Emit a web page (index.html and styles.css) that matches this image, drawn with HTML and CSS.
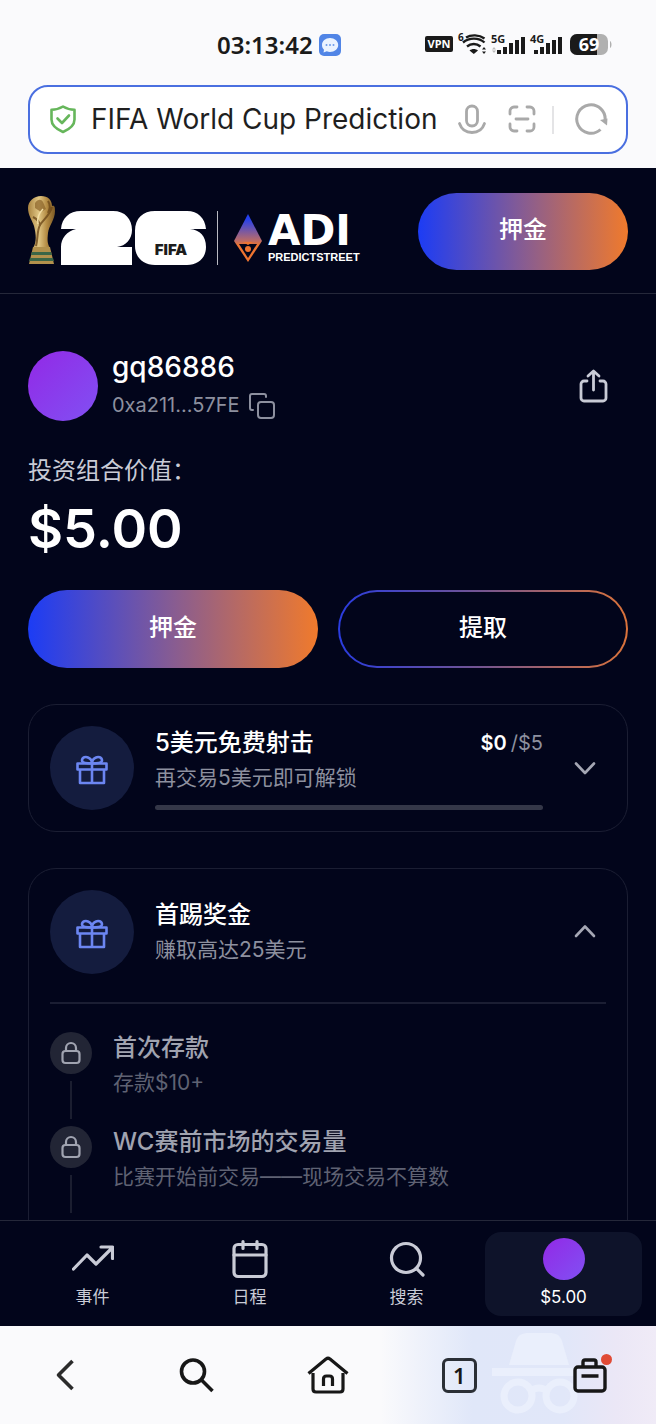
FILE: index.html
```html
<!DOCTYPE html>
<html lang="zh-CN">
<head>
<meta charset="UTF-8" />
<meta name="viewport" content="width=device-width, initial-scale=1" />
<title>FIFA World Cup Prediction</title>
<link rel="stylesheet" href="styles.css">
</head>
<body>
  <!-- Phone status + address bar -->
  <div class="chrome">
    <div class="status">
      <span class="time">03:13:42</span>
      <svg class="msg" viewBox="0 0 22 22" aria-hidden="true">
        <rect width="22" height="22" rx="5" fill="#5185e6"/>
        <path d="M11 4C6.500 4 3 7 3 11c0 2 .8 3.500 2 4.800L4.500 18.500l3.300-1.200c1 .4 2 .6 3.200.6 4.500 0 8.200-3 8.200-7S15.500 4 11 4z" fill="#eaf3ff"/>
        <circle cx="7.500" cy="11" r="1" fill="#6b9bea"/><circle cx="11" cy="11" r="1" fill="#6b9bea"/><circle cx="14.500" cy="11" r="1" fill="#6b9bea"/>
      </svg>
      <svg class="signals" viewBox="0 0 188 26" aria-hidden="true">
        <rect x="0" y="4" width="28" height="16" rx="2" fill="#1a1a1a"/>
        <text x="14" y="16" text-anchor="middle" font-size="11" font-weight="700" fill="#fff">VPN</text>
        <text x="33" y="9" font-size="10" font-weight="700" fill="#1a1a1a">6</text>
        <g fill="none" stroke="#1a1a1a" stroke-width="2.400">
          <path d="M41 5.500c5-3 13-3 18.500 1"/>
          <path d="M38 10.500c6-5.200 16-5.200 21.500 0"/>
          <path d="M42 14.500c4-3.400 9.500-3.400 13.500 0"/>
        </g>
        <path d="M44.500 18.500c2.500-2 6-2 8.500 0L48.800 22z" fill="#1a1a1a"/>
        <path d="M59 15l2 2.500h-4zM59 22l2-2.500h-4z" fill="#1a1a1a"/>
        <text x="66" y="11" font-size="11" font-weight="700" fill="#1a1a1a">5G</text>
        <path d="M69 15l2 2.500h-4zM69 21l2-2.500h-4z" fill="#bbb"/>
        <g fill="#1a1a1a">
          <rect x="72" y="18" width="4" height="4"/><rect x="78" y="15" width="4" height="7"/><rect x="84" y="11" width="4" height="11"/><rect x="90" y="8" width="4" height="14"/><rect x="96" y="5" width="4" height="17"/>
          <rect x="109" y="18" width="4" height="4"/><rect x="115" y="15" width="4" height="7"/><rect x="121" y="11" width="4" height="11"/><rect x="127" y="8" width="4" height="14"/><rect x="133" y="5" width="4" height="17"/>
        </g>
        <text x="105" y="11" font-size="11" font-weight="700" fill="#1a1a1a">4G</text>
        <rect x="145" y="2" width="38" height="21" rx="7" fill="#b0b0b0"/>
        <path d="M152 2h20v21h-20a7 7 0 0 1-7-7V9a7 7 0 0 1 7-7z" fill="#1a1a1a"/>
        <path d="M185 9c2 1 2 6 0 7z" fill="#b0b0b0"/>
        <text x="164" y="19" text-anchor="middle" font-size="18" font-weight="700" fill="#fff">69</text>
      </svg>
    </div>
    <div class="address">
      <svg class="shield" viewBox="0 0 30 30" fill="none" stroke="#66b65b" stroke-width="2.600" stroke-linejoin="round" stroke-linecap="round" aria-hidden="true">
        <path d="M15 1.500c3.500 2.200 7.500 3.200 11.500 3.200v9.800c0 5.500-4.500 9.500-11.500 12.500C8 24 3.500 20 3.500 14.500V4.700c4 0 8-1 11.500-3.200z"/>
        <path d="M9.500 13.500l4.500 4.500 7-7.500"/>
      </svg>
      <input class="address-input" type="text" value="FIFA World Cup Prediction" aria-label="地址栏">
      <button class="icon-btn" aria-label="语音">
        <svg viewBox="0 0 30 34" width="30" height="34" fill="none" stroke="#a9a9a9" stroke-width="2.800" stroke-linecap="round">
          <rect x="9.500" y="3" width="11" height="20" rx="5.500"/>
          <path d="M2.500 20.500c2 6 7 9 12.500 9s10.500-3 12.500-9"/>
        </svg>
      </button>
      <button class="icon-btn scan" aria-label="扫描">
        <svg viewBox="0 0 30 34" width="30" height="34" fill="none" stroke="#a9a9a9" stroke-width="2.800" stroke-linecap="round">
          <path d="M3 11V8a4 4 0 0 1 4-4h3M20 4h3a4 4 0 0 1 4 4v3M27 21v3a4 4 0 0 1-4 4h-3M10 28H7a4 4 0 0 1-4-4v-3M9 16h12"/>
        </svg>
      </button>
      <span class="sep"></span>
      <button class="icon-btn" aria-label="刷新">
        <svg viewBox="0 0 34 34" width="34" height="34" fill="none" stroke="#a9a9a9" stroke-width="3">
          <path d="M26.500 26.500A14.200 14.200 0 1 1 31 18"/>
          <path d="M26 17l7.500-1.500-.5 7z" fill="#a9a9a9" stroke="none"/>
        </svg>
      </button>
    </div>
  </div>

  <header class="header">
    <a class="brand" href="#" aria-label="ADI Predictstreet">
      <svg class="trophy" viewBox="0 0 28 70" aria-hidden="true">
        <defs>
          <linearGradient id="gold" x1="0" x2="1" y1="0" y2="0">
            <stop offset="0" stop-color="#a98340"/><stop offset=".4" stop-color="#e0c684"/><stop offset=".7" stop-color="#b38a42"/><stop offset="1" stop-color="#7c5a25"/>
          </linearGradient>
        </defs>
        <path d="M13 1c7 0 11 4 11 10 3-1 3 2 3 5 0 9-6 14-7 22-.6 6-1 10 2 15H5c4-6 3-14 1-22C4 25 0 20 0 13 0 6 6 1 13 1z" fill="url(#gold)"/>
        <path d="M7 8c3-4 6-4 8-1l3 7-5 3-6-4z" fill="#8a6228" opacity=".7"/>
        <path d="M24 12c-2 8-8 12-12 18-3 5-2 14-4 21M5 22c4 2 7 5 7 9M20 6c2 3 2 8 0 12" fill="none" stroke="#6d4819" stroke-width="2" opacity=".8"/>
        <path d="M15 14c-4 4-6 9-5 15" fill="none" stroke="#f3dfa5" stroke-width="1.500"/>
        <path d="M5 52h17l4 17H1z" fill="#b2914c"/>
        <path d="M4 57h19l1 3H3zM2 63h23l1 3H1z" fill="#3b6647"/>
      </svg>
      <svg class="mark" viewBox="0 0 145 54" role="img" aria-label="26">
        <g fill="#fff">
          <path d="M0 18C1 7 8 0 20 0h32c12 0 19 8 19 19 0 9-6 16-15 17h15v18H0V36c0-9 6-16 15-18z"/>
          <path d="M74 20C74 7 82 0 94 0h32c11 0 18 7 19 18h-16c10 1 16 7 16 18 0 11-8 18-19 18H94c-12 0-20-8-20-19z"/>
        </g>
        <text x="110" y="44" text-anchor="middle" font-size="15" font-weight="900" fill="#1c1c1c">FIFA</text>
      </svg>
      <span class="brand-line"></span>
      <svg class="gem" viewBox="0 0 28 50" aria-hidden="true">
        <defs>
          <linearGradient id="gem" x1="0" x2="0" y1="0" y2="1">
            <stop offset=".1" stop-color="#2440ee"/><stop offset=".55" stop-color="#b96a68"/><stop offset=".65" stop-color="#ee7430"/>
          </linearGradient>
        </defs>
        <path d="M14 1l14 27-14 21L0 28z" fill="url(#gem)"/>
        <path d="M5 31h18l-9 14z" fill="#02051b"/>
        <path d="M9 29h10l-5 3z" fill="#ee7430"/>
        <circle cx="14" cy="36" r="3" fill="#ee7430"/>
      </svg>
      <span class="brand-name">
        <span class="brand-top">ADI</span>
        <span class="brand-sub">PREDICTSTREET</span>
      </span>
    </a>
    <button class="btn btn-fill btn-header">押金</button>
  </header>

  <main class="content">
    <section class="profile">
      <div class="avatar"></div>
      <div class="who">
        <h1 class="name">gq86886</h1>
        <div class="wallet">
          <span>0xa211...57FE</span>
          <button class="icon-btn" aria-label="复制">
            <svg viewBox="0 0 28 28" width="28" height="28" fill="none" stroke="#8d909f" stroke-width="2" stroke-linecap="round">
              <rect x="10" y="11" width="16" height="16" rx="3"/>
              <path d="M5 19H4a2 2 0 0 1-2-2V5a2 2 0 0 1 2-2h12a2 2 0 0 1 2 2v1"/>
            </svg>
          </button>
        </div>
      </div>
      <button class="icon-btn share" aria-label="分享">
        <svg viewBox="0 0 30 34" width="30" height="34" fill="none" stroke="#c9cbd6" stroke-width="2.800" stroke-linecap="round" stroke-linejoin="round">
          <path d="M9 12H6a3 3 0 0 0-3 3v14a3 3 0 0 0 3 3h19a3 3 0 0 0 3-3V15a3 3 0 0 0-3-3h-3"/>
          <path d="M15.500 21V3M10 7l5.500-5L21 7"/>
        </svg>
      </button>
    </section>

    <p class="label">投资组合价值：</p>
    <p class="balance">$5.00</p>

    <div class="actions">
      <button class="btn btn-fill">押金</button>
      <button class="btn btn-outline">提取</button>
    </div>

    <section class="card">
      <div class="card-head">
        <div class="badge">
          <svg viewBox="0 0 32 30" width="32" height="30" fill="none" stroke="#6c86f2" stroke-width="2.600" stroke-linejoin="round">
            <rect x="1.500" y="8.500" width="29" height="6"/>
            <path d="M4 14.500V28h24V14.500M16 8.500V28"/>
            <path d="M16 8.500C10 8.500 6 8 6 5.500 6 2 10 1.500 12 2.500c2.500 1 4 3.500 4 6zM16 8.500c6 0 10-.5 10-3C26 2 22 1.500 20 2.500c-2.500 1-4 3.500-4 6z"/>
          </svg>
        </div>
        <div class="card-body">
          <div class="card-row">
            <h2 class="card-title">5美元免费射击</h2>
            <span class="amount"><b>$0</b><span>/$5</span></span>
          </div>
          <p class="card-sub">再交易5美元即可解锁</p>
          <div class="bar" role="progressbar" aria-valuemin="0" aria-valuemax="5" aria-valuenow="0" aria-label="进度"></div>
        </div>
        <button class="icon-btn chevron" aria-label="展开">
          <svg viewBox="0 0 24 24" width="24" height="24" fill="none" stroke="#a5a7b4" stroke-width="2.600" stroke-linecap="round" stroke-linejoin="round"><path d="M3 7.500l9 9.500 9-9.500"/></svg>
        </button>
      </div>
    </section>

    <section class="card">
      <div class="card-head">
        <div class="badge">
          <svg viewBox="0 0 32 30" width="32" height="30" fill="none" stroke="#6c86f2" stroke-width="2.600" stroke-linejoin="round">
            <rect x="1.500" y="8.500" width="29" height="6"/>
            <path d="M4 14.500V28h24V14.500M16 8.500V28"/>
            <path d="M16 8.500C10 8.500 6 8 6 5.500 6 2 10 1.500 12 2.500c2.500 1 4 3.500 4 6zM16 8.500c6 0 10-.5 10-3C26 2 22 1.500 20 2.500c-2.500 1-4 3.500-4 6z"/>
          </svg>
        </div>
        <div class="card-body">
          <h2 class="card-title">首踢奖金</h2>
          <p class="card-sub">赚取高达25美元</p>
        </div>
        <button class="icon-btn chevron" aria-label="收起">
          <svg viewBox="0 0 24 24" width="24" height="24" fill="none" stroke="#a5a7b4" stroke-width="2.600" stroke-linecap="round" stroke-linejoin="round"><path d="M3 16l9-9.500 9 9.500"/></svg>
        </button>
      </div>
      <ol class="steps">
        <li class="step">
          <div class="rail">
            <span class="lock">
              <svg viewBox="0 0 20 24" width="20" height="24" fill="none" stroke="#a0a3b0" stroke-width="2.200"><rect x="1.500" y="10" width="17" height="12" rx="3"/><path d="M5 10V7a5 5 0 0 1 10 0v3"/></svg>
            </span>
          </div>
          <div>
            <h3 class="step-title">首次存款</h3>
            <p class="step-sub">存款$10+</p>
          </div>
        </li>
        <li class="step">
          <div class="rail">
            <span class="lock">
              <svg viewBox="0 0 20 24" width="20" height="24" fill="none" stroke="#a0a3b0" stroke-width="2.200"><rect x="1.500" y="10" width="17" height="12" rx="3"/><path d="M5 10V7a5 5 0 0 1 10 0v3"/></svg>
            </span>
          </div>
          <div>
            <h3 class="step-title">WC赛前市场的交易量</h3>
            <p class="step-sub">比赛开始前交易——现场交易不算数</p>
          </div>
        </li>
      </ol>
    </section>
  </main>

  <nav class="tabs">
    <a class="tab" href="#">
      <svg viewBox="0 0 42 42" fill="none" stroke="#c9cbd6" stroke-width="3.200" stroke-linecap="round" stroke-linejoin="round"><path d="M1.500 31l13.500-14 9 9L40 10M29 9h11.500v11.500"/></svg>
      <span>事件</span>
    </a>
    <a class="tab" href="#">
      <svg viewBox="0 0 42 42" fill="none" stroke="#c9cbd6" stroke-width="3.200" stroke-linecap="round"><rect x="5" y="6.500" width="32" height="32" rx="4"/><path d="M5 17h32M14 3.500v7M28 3.500v7"/></svg>
      <span>日程</span>
    </a>
    <a class="tab" href="#">
      <svg viewBox="0 0 42 42" fill="none" stroke="#c9cbd6" stroke-width="3.200" stroke-linecap="round"><circle cx="20" cy="20" r="14.500"/><path d="M30.500 30.500l6.500 6.500"/></svg>
      <span>搜索</span>
    </a>
    <a class="tab active" href="#">
      <div class="avatar small"></div>
      <span>$5.00</span>
    </a>
  </nav>

  <!-- Browser toolbar -->
  <div class="toolbar">
    <svg class="incognito" viewBox="0 0 90 84" aria-hidden="true">
      <g fill="#eaeffc">
        <path d="M17 32l7-24c2-6 6-8 13-8h20c7 0 11 2 13 8l7 24z"/>
        <rect x="0" y="35" width="84" height="8"/>
      </g>
      <g fill="none" stroke="#eaeffc" stroke-width="7"><circle cx="26" cy="63" r="14"/><circle cx="68" cy="63" r="14"/><path d="M39 58c5-4 11-4 16 0"/></g>
    </svg>
    <button class="icon-btn" aria-label="后退">
      <svg viewBox="0 0 36 36" width="36" height="36" fill="none" stroke="#2b2b2b" stroke-width="3.600" stroke-linejoin="round"><path d="M24.500 4L10.500 18l14 14"/></svg>
    </button>
    <button class="icon-btn" aria-label="搜索网页">
      <svg viewBox="0 0 36 36" width="36" height="36" fill="none" stroke="#171717" stroke-width="3.600"><circle cx="14" cy="14.500" r="11.500"/><path d="M22 22.500L33.500 34"/></svg>
    </button>
    <button class="icon-btn" aria-label="主页">
      <svg viewBox="0 0 42 40" width="42" height="40" fill="none" stroke="#171717" stroke-width="3.200" stroke-linejoin="round"><path d="M1.500 18.500L19 4q2-1.500 4 0l17.500 14.500"/><path d="M6 18v16q0 3 3 3h24q3 0 3-3V18"/><path d="M16.500 31v-7q0-3 3-3h3q3 0 3 3v7"/></svg>
    </button>
    <button class="icon-btn pages" aria-label="标签页">1</button>
    <button class="icon-btn bag" aria-label="工具箱">
      <svg viewBox="0 0 36 36" width="36" height="36" fill="none" stroke="#171717" stroke-width="3.400" stroke-linejoin="round"><rect x="3" y="10" width="30" height="24" rx="3"/><path d="M11 10V5q0-2 2-2h9q2 0 2 2v5M9.500 19h17"/></svg>
      <span class="dot"></span>
    </button>
  </div>
</body>
</html>
```
FILE: styles.css
```css
/* Reset and base */
* {
  box-sizing: border-box;
}
body {
  margin: 0;
  height: 100vh;
  display: flex;
  flex-direction: column;
  font-family: Inter, "Noto Sans CJK SC", sans-serif;
  background-color: #02051b;
  color: #fff;
}
h1, h2, h3, p, ol {
  margin: 0;
  padding: 0;
}
button {
  font-family: inherit;
  cursor: pointer;
}
svg {
  display: block;
  flex: none;
}
.icon-btn {
  display: flex;
  align-items: center;
  justify-content: center;
  flex: none;
  padding: 0;
  border: none;
  background: none;
}

/* Status + address */
.chrome {
  background-color: #fafafc;
  padding: 4px 28px 14px;
}
.status {
  height: 81px;
  display: flex;
  align-items: center;
  gap: 6px;
  padding: 0 15px 0 189px;
  color: #1a1a1a;
}
.time {
  font-family: "Noto Sans", sans-serif;
  font-size: 24px;
  font-weight: 600;
}
.msg {
  width: 22px;
  height: 22px;
}
.signals {
  width: 188px;
  height: 26px;
  margin-left: auto;
  overflow: visible;
  font-family: "Noto Sans", sans-serif;
}
.address {
  height: 69px;
  display: flex;
  align-items: center;
  padding: 0 18px;
  border: 2px solid #4a6fe0;
  border-radius: 20px;
  background-color: #fff;
}
.shield {
  width: 30px;
  height: 30px;
}
.address-input {
  flex: 1;
  min-width: 0;
  margin: 0 4px 0 13px;
  padding: 0 0 2px;
  border: none;
  outline: none;
  background: none;
  color: #1f1f1f;
  font-family: Inter, sans-serif;
  font-size: 28px;
}
.scan {
  margin-left: 20px;
}
.sep {
  width: 2px;
  height: 28px;
  margin: 0 20px 0 15px;
  background-color: #e4e4e6;
}

/* Header */
.header {
  display: flex;
  align-items: center;
  justify-content: space-between;
  padding: 25px 28px 23px;
  border-bottom: 1px solid #25283a;
}
.brand {
  display: flex;
  align-items: flex-end;
  padding-bottom: 4px;
  color: #fff;
  text-decoration: none;
}
.trophy {
  width: 28px;
  height: 70px;
  margin-right: 5px;
}
.mark {
  width: 145px;
  height: 54px;
}
.brand-line {
  width: 1px;
  height: 54px;
  margin: 0 16px 0 11px;
  background-color: #b9bac2;
}
.gem {
  width: 28px;
  height: 50px;
  margin: 0 6px 2px 0;
}
.brand-name {
  display: flex;
  flex-direction: column;
}
.brand-top {
  font-family: "DejaVu Sans", sans-serif;
  font-size: 42px;
  font-weight: 700;
  line-height: 36px;
}
.brand-sub {
  font-family: "Liberation Sans", sans-serif;
  font-size: 11px;
  font-weight: 700;
  line-height: 16px;
}

/* Buttons */
.btn {
  height: 78px;
  padding: 0 0 8px;
  border: 2px solid transparent;
  border-radius: 39px;
  color: #fff;
  font-size: 24px;
  font-weight: 500;
}
.btn-fill {
  background: linear-gradient(90deg, #1c3cf5, #875c92 50%, #f07a2c) border-box;
}
.btn-outline {
  background:
    linear-gradient(#02051b, #02051b) padding-box,
    linear-gradient(90deg, #2a3ce0, #75558f 50%, #dc733a) border-box;
}
.btn-header {
  width: 210px;
  height: 77px;
}

/* Page */
.content {
  flex: 1;
  min-height: 0;
  overflow-y: auto;
  scrollbar-width: none;
  padding: 54px 28px 0;
}
.profile {
  display: flex;
  align-items: center;
}
.avatar {
  width: 70px;
  height: 70px;
  flex: none;
  border-radius: 50%;
  background: linear-gradient(135deg, #9229e6, #8150f3);
}
.avatar.small {
  width: 42px;
  height: 42px;
}
.who {
  flex: 1;
  padding-left: 14px;
}
.name {
  font-size: 28px;
  font-weight: 500;
  line-height: 38px;
}
.wallet {
  display: flex;
  align-items: center;
  gap: 8px;
  height: 38px;
  color: #8d909f;
  font-size: 20px;
}
.share {
  width: 70px;
  height: 70px;
}
.label {
  margin-top: 31px;
  color: #c9cbd6;
  font-size: 24px;
  line-height: 32px;
}
.balance {
  margin-top: 10px;
  font-size: 54px;
  font-weight: 600;
  line-height: 64px;
}
.actions {
  display: grid;
  grid-template-columns: 1fr 1fr;
  gap: 20px;
  margin-top: 29px;
}

/* Cards */
.card {
  margin-top: 36px;
  padding: 21px;
  border: 1px solid #1b1e33;
  border-radius: 28px;
}
.card-head {
  display: flex;
  align-items: center;
  gap: 21px;
}
.badge {
  width: 84px;
  height: 84px;
  flex: none;
  display: flex;
  align-items: center;
  justify-content: center;
  padding-top: 4px;
  border-radius: 50%;
  background-color: #141c3e;
}
.card-body {
  flex: 1;
}
.card-row {
  display: flex;
  justify-content: space-between;
}
.card-title {
  font-size: 24px;
  font-weight: 500;
  line-height: 32px;
}
.card-sub {
  margin-top: 4px;
  color: #8d909f;
  font-size: 21px;
  line-height: 30px;
}
.amount {
  display: flex;
  gap: 4px;
  color: #8d909f;
  font-size: 20px;
  line-height: 32px;
}
.amount b {
  color: #fff;
  font-weight: 600;
}
.bar {
  height: 5px;
  margin-top: 12px;
  border-radius: 3px;
  background-color: #343748;
}
.chevron {
  width: 42px;
  height: 42px;
}
.steps {
  list-style: none;
  margin-top: 28px;
  padding: 28px 0;
  border-top: 2px solid #1b1e33;
}
.step {
  display: flex;
  gap: 21px;
}
.rail {
  width: 42px;
  height: 94px;
  display: flex;
  flex-direction: column;
  align-items: center;
  gap: 7px;
  padding-bottom: 7px;
}
.rail::after {
  content: "";
  width: 2px;
  flex: 1;
  background-color: #1b1e30;
}
.lock {
  width: 42px;
  height: 42px;
  display: flex;
  align-items: center;
  justify-content: center;
  border-radius: 50%;
  background-color: #222535;
}
.step-title {
  color: #a0a3b0;
  font-size: 24px;
  font-weight: 500;
  line-height: 32px;
}
.step-sub {
  margin-top: 4px;
  color: #5f6273;
  font-size: 21px;
  line-height: 30px;
}

/* Tabs */
.tabs {
  display: grid;
  grid-template-columns: repeat(4, 1fr);
  padding: 11px 14px 10px;
  border-top: 1px solid #25283a;
}
.tab {
  height: 84px;
  display: flex;
  flex-direction: column;
  align-items: center;
  gap: 4px;
  padding-top: 6px;
  border-radius: 16px;
  color: #c9cbd6;
  font-size: 17px;
  line-height: 26px;
  text-decoration: none;
}
.tab svg {
  width: 42px;
  height: 42px;
}
.tab.active {
  background-color: #0e132a;
  color: #fff;
}

/* Browser toolbar */
.toolbar {
  position: relative;
  height: 98px;
  display: grid;
  grid-template-columns: repeat(5, 1fr);
  align-items: center;
  justify-items: center;
  background: linear-gradient(90deg, #fafafc 58%, #e0e7f9 72%, #e1e7f9 86%, #ebe7f6 94%, #f0ebf7);
}
.toolbar .icon-btn {
  position: relative;
}
.incognito {
  position: absolute;
  right: 74px;
  top: 7px;
  width: 90px;
  height: 84px;
}
.pages {
  width: 35px;
  height: 35px;
  border: 3px solid #2b2f36;
  border-radius: 6px;
  color: #171717;
  font-family: "Noto Sans", sans-serif;
  font-size: 22px;
  font-weight: 600;
}
.dot {
  position: absolute;
  top: -3px;
  right: -4px;
  width: 11px;
  height: 11px;
  border-radius: 50%;
  background-color: #e04a35;
}
```
